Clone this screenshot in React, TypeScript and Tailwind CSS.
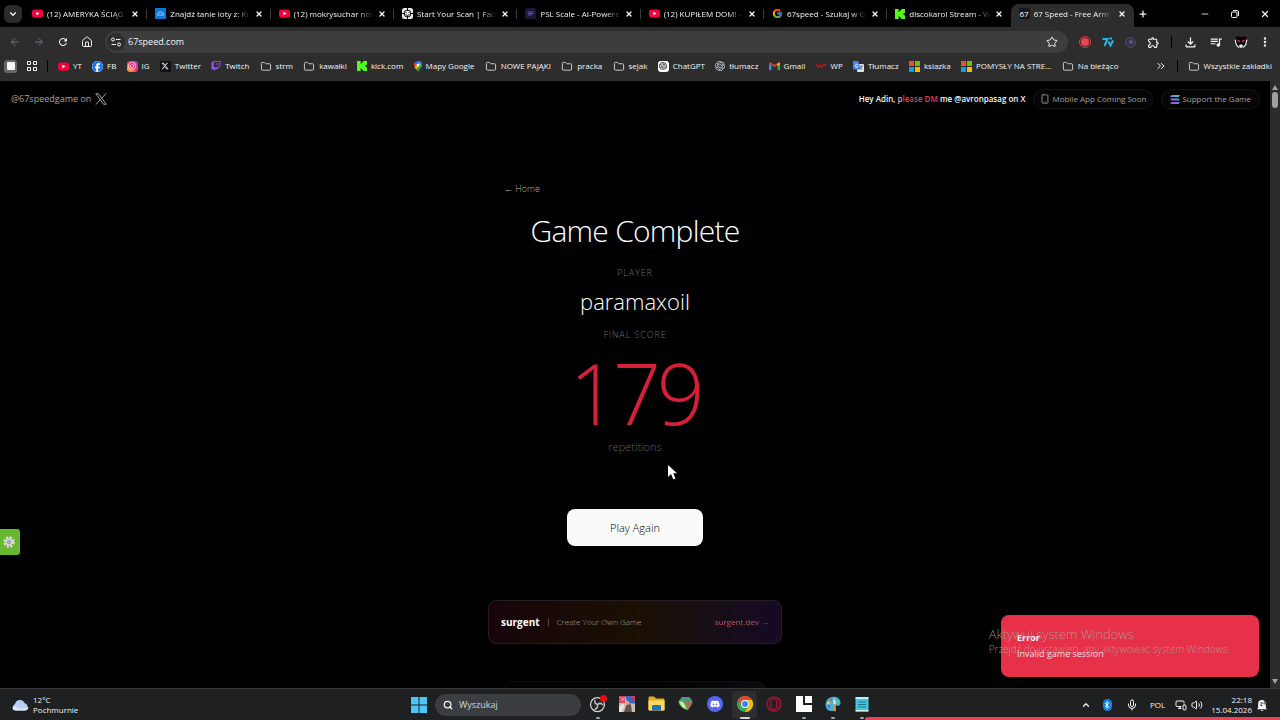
import React from 'react';
import {
  ArrowLeft,
  ArrowRight,
  Bluetooth,
  ChevronDown,
  ChevronsRight,
  ChevronUp,
  EllipsisVertical,
  Folder,
  House,
  Mic,
  Minus,
  MonitorSmartphone,
  Plus,
  Search,
  Smartphone,
  Star,
  Volume2,
  X,
} from 'lucide-react';
import { FaDiscord, FaFacebook, FaInstagram, FaTwitch, FaXTwitter } from 'react-icons/fa6';
import { FcGoogle } from 'react-icons/fc';
import { MdOutlineExtension, MdOutlineFileDownload, MdOutlineQueueMusic, MdRefresh } from 'react-icons/md';
import { SiOpenai } from 'react-icons/si';

const YoutubeIcon = () => (
  <svg viewBox="0 0 24 24" className="size-[11px] shrink-0">
    <rect x="0" y="3" width="24" height="18" rx="5" fill="#f5003c" />
    <path d="M9.5 8v8l7-4z" fill="#fff" />
  </svg>
);

const KickIcon = () => (
  <svg viewBox="0 0 11 11" className="size-[10px] shrink-0">
    <path d="M0 0h4v3h1V2h1V1h1V0h4v4h-1v1H9v1h1v1h1v4H7v-1H6V9H5V8H4v3H0z" fill="#53fc18" />
  </svg>
);

const BoatIcon = () => (
  <svg viewBox="0 0 22 22" className="size-[11px] shrink-0">
    <rect width="22" height="22" fill="#0b78d8" />
    <path d="M5 13q0-5 6-5t6 5M4 14h14" stroke="#9fd0ff" strokeWidth="2" fill="none" />
  </svg>
);

const FaceIcon = () => (
  <svg viewBox="0 0 22 22" className="size-[11px] shrink-0">
    <rect width="22" height="22" rx="5" fill="#eee" />
    <circle cx="11" cy="11" r="7" fill="none" stroke="#111" strokeWidth="2" />
    <path d="M11 0v6M11 16v6M0 11h6M16 11h6M8 8v2M14 8v2M7 13q4 4 8 0" stroke="#111" strokeWidth="2" fill="none" />
  </svg>
);

const PslIcon = () => (
  <svg viewBox="0 0 22 22" className="size-[11px] shrink-0">
    <rect width="22" height="22" rx="4" fill="#1a1638" />
    <path d="M5 8h12M5 11h12M6 14h8" stroke="#5b4fc4" strokeWidth="2" />
  </svg>
);

const SpeedIcon = () => (
  <span className="flex size-[11px] shrink-0 items-center justify-center bg-[#181818] text-[8px] leading-none text-white">67</span>
);

const InstagramIcon = () => (
  <span className="flex size-[11px] shrink-0 items-center justify-center rounded-[3px] bg-linear-to-tr from-[#fdb432] via-[#f0275f] to-[#a42ee0] text-white">
    <FaInstagram className="size-2" />
  </span>
);

const XLogoIcon = () => (
  <span className="flex size-[11px] shrink-0 items-center justify-center bg-[#111] text-gray-200">
    <FaXTwitter className="size-2" />
  </span>
);

const MapsIcon = () => (
  <svg viewBox="0 0 16 22" className="h-[11px] w-2 shrink-0">
    <path d="M8 0a8 8 0 0 1 8 8H8z" fill="#4285f4" />
    <path d="M8 0a8 8 0 0 0-6 2.600L8 8z" fill="#1a73e8" />
    <path d="M2 2.600A8 8 0 0 0 1 12l7-4z" fill="#ea4335" />
    <path d="M1 12c1 2 2 3 3.500 5L13 6 8 8z" fill="#fbbc04" />
    <path d="M16 8c0 6-6 8-8 14-1-3-2-4-3.500-5L13 6z" fill="#34a853" />
    <circle cx="8" cy="8" r="3" fill="#fff" />
  </svg>
);

const GmailIcon = () => (
  <svg viewBox="0 0 22 16" className="h-2 w-[11px] shrink-0">
    <path d="M0 3v13h5V6z" fill="#4285f4" />
    <path d="M22 3v13h-5V6z" fill="#34a853" />
    <path d="M0 2l11 8 11-8-2-2-9 6-9-6z" fill="#ea4335" />
    <path d="M17 4l5-3v4l-5 4z" fill="#fbbc04" />
  </svg>
);

const WpIcon = () => (
  <svg viewBox="0 0 22 12" className="h-1.5 w-[11px] shrink-0">
    <path d="M1 2l3 8 4-7 3 7 3-8h5q3 4-4 4" fill="none" stroke="#d8141c" strokeWidth="2" />
  </svg>
);

const TranslateIcon = () => (
  <svg viewBox="0 0 22 22" className="size-[11px] shrink-0">
    <rect x="8" y="6" width="14" height="16" rx="2" fill="#dfe3ea" />
    <path d="M0 2q0-2 2-2h8l6 17H2q-2 0-2-2z" fill="#4b86ee" />
    <path d="M10 8a3 3 0 1 0 0 3H7" stroke="#fff" strokeWidth="1.500" fill="none" />
    <path d="M14 10h6M17 9v2q-1 4-3 5M15 12l4 5" stroke="#667" strokeWidth="1.500" fill="none" />
  </svg>
);

const MicrosoftIcon = () => (
  <svg viewBox="0 0 22 22" className="size-[11px] shrink-0">
    <path d="M0 0h10v10H0z" fill="#f25022" />
    <path d="M12 0h10v10H12z" fill="#7fba00" />
    <path d="M0 12h10v10H0z" fill="#00a4ef" />
    <path d="M12 12h10v10H12z" fill="#ffb900" />
  </svg>
);

const ChatGptIcon = () => (
  <span className="flex size-[11px] shrink-0 items-center justify-center rounded-[3px] bg-white text-black">
    <SiOpenai className="size-2" />
  </span>
);

const FolderIcon = () => <Folder className="h-[11px] w-3 shrink-0 text-gray-300" strokeWidth={2} />;

const TABS = [
  { id: 1, label: '(12) AMERYKA ŚCIĄG', icon: <YoutubeIcon /> },
  { id: 2, label: 'Znajdź tanie loty z: Kr', icon: <BoatIcon /> },
  { id: 3, label: '(12) mokrysuchar nov', icon: <YoutubeIcon /> },
  { id: 4, label: 'Start Your Scan | Face', icon: <FaceIcon /> },
  { id: 5, label: 'PSL Scale - AI-Powere', icon: <PslIcon /> },
  { id: 6, label: '(12) KUPIŁEM DOM! -', icon: <YoutubeIcon /> },
  { id: 7, label: '67speed - Szukaj w G', icon: <FcGoogle className="size-[11px] shrink-0" /> },
  { id: 8, label: 'discokarol Stream - W', icon: <KickIcon /> },
  { id: 9, label: '67 Speed - Free Arm', icon: <SpeedIcon />, active: true },
];

const BOOKMARKS = [
  { name: 'YT', icon: <YoutubeIcon /> },
  { name: 'FB', icon: <FaFacebook className="size-[11px] shrink-0 rounded-full bg-white text-[#1877f2]" /> },
  { name: 'IG', icon: <InstagramIcon /> },
  { name: 'Twitter', icon: <XLogoIcon /> },
  { name: 'Twitch', icon: <FaTwitch className="size-[10px] shrink-0 text-[#9a55ff]" /> },
  { name: 'strm', icon: <FolderIcon /> },
  { name: 'kawałki', icon: <FolderIcon /> },
  { name: 'kick.com', icon: <KickIcon /> },
  { name: 'Mapy Google', icon: <MapsIcon /> },
  { name: 'NOWE PAJĄKI', icon: <FolderIcon /> },
  { name: 'pracka', icon: <FolderIcon /> },
  { name: 'sejak', icon: <FolderIcon /> },
  { name: 'ChatGPT', icon: <ChatGptIcon /> },
  { name: 'tłumacz', icon: <SiOpenai className="size-[10px] shrink-0 text-gray-300" /> },
  { name: 'Gmail', icon: <GmailIcon /> },
  { name: 'WP', icon: <WpIcon /> },
  { name: 'Tłumacz', icon: <TranslateIcon /> },
  { name: 'ksiazka', icon: <MicrosoftIcon /> },
  { name: 'POMYSŁY NA STRE...', icon: <MicrosoftIcon /> },
  { name: 'Na bieżąco', icon: <FolderIcon /> },
];

function TabStrip() {
  return (
    <div className="flex h-[27px] shrink-0 items-center bg-black">
      <button aria-label="Szukaj kart" className="ml-1 flex size-[18px] shrink-0 items-center justify-center rounded-md bg-[#2b2b2b]">
        <ChevronDown className="size-2.5" strokeWidth={3} />
      </button>
      <div role="tablist" className="ml-0.5 flex min-w-0 flex-1 self-stretch pt-1">
        {TABS.map((tab, i) => (
          <div
            key={tab.id}
            className={`relative flex min-w-0 flex-1 items-center gap-1 px-2 pb-1 ${tab.active ? 'rounded-t-lg bg-[#2d2d2d]' : ''}`}
          >
            {tab.icon}
            <button
              role="tab"
              aria-selected={!!tab.active}
              className="min-w-0 flex-1 overflow-hidden mask-r-from-80% text-left text-[8px] leading-3 font-normal whitespace-nowrap"
            >
              {tab.label}
            </button>
            <button aria-label="Zamknij kartę">
              <X className="size-2" strokeWidth={4} />
            </button>
            {i < TABS.length - 2 && <span className="absolute right-0 h-2.5 w-px bg-[#3a3a3a]" />}
          </div>
        ))}
      </div>
      <div className="flex w-[146px] shrink-0 items-center justify-between pr-2.5 pl-1">
        <button aria-label="Nowa karta">
          <Plus className="size-2.5" strokeWidth={3} />
        </button>
        <div className="flex gap-5">
          <button aria-label="Minimalizuj">
            <Minus className="size-2.5" />
          </button>
          <button aria-label="Przywróć">
            <svg viewBox="0 0 20 20" className="size-2.5" fill="none" stroke="currentColor" strokeWidth="2">
              <rect x="3" y="6" width="11" height="11" rx="2" />
              <path d="M6 3h8q3 0 3 3v8" />
            </svg>
          </button>
          <button aria-label="Zamknij">
            <X className="size-2.5" strokeWidth={3} />
          </button>
        </div>
      </div>
    </div>
  );
}

function Toolbar() {
  return (
    <div className="flex h-[30px] items-center">
      <div className="flex w-[105px] shrink-0 items-center gap-3 pl-[9px]">
        <button aria-label="Wstecz"><ArrowLeft className="size-3 text-gray-500" /></button>
        <button aria-label="Dalej"><ArrowRight className="size-3 text-gray-500" /></button>
        <button aria-label="Odśwież"><MdRefresh className="size-3" /></button>
        <button aria-label="Strona główna"><House className="size-3" strokeWidth={2} /></button>
      </div>
      <div className="flex h-[22px] min-w-0 flex-1 items-center rounded-full bg-[#3d3d3d] pr-2.5 pl-0.5">
        <span className="flex size-[18px] shrink-0 items-center justify-center rounded-full bg-[#2d2d2d]">
          <svg viewBox="0 0 20 20" className="size-2.5" fill="none" stroke="currentColor" strokeWidth="2">
            <circle cx="4" cy="5" r="3" />
            <circle cx="16" cy="15" r="3" />
            <path d="M10 5h9M1 15h9" />
          </svg>
        </span>
        <input
          aria-label="Adres"
          defaultValue="67speed.com"
          className="ml-[3px] min-w-0 flex-1 bg-transparent text-[9px] leading-4 outline-none"
        />
        <button aria-label="Dodaj zakładkę"><Star className="size-3" strokeWidth={2} /></button>
      </div>
      <div className="flex w-[212px] shrink-0 items-center justify-between pr-[9px] pl-[11px]">
        <button aria-label="Nagrywanie" className="flex size-3 items-center justify-center rounded-full border border-[#e23c4a]">
          <span className="size-2 rounded-full bg-[#e9434f]" />
        </button>
        <button aria-label="7TV">
          <svg viewBox="0 0 24 20" className="h-2.5 w-3" fill="none" stroke="#29b6e8" strokeWidth="4">
            <path d="M1 4h10L5 18M13 9l4 8 5-10M15 3h5" />
          </svg>
        </button>
        <button aria-label="Rozszerzenie" className="flex size-[11px] items-center justify-center rounded-full border border-[#51496b] bg-[#35314a]">
          <span className="size-1 rounded-full bg-[#5c5778]" />
        </button>
        <button aria-label="Rozszerzenia"><MdOutlineExtension className="size-[13px]" /></button>
        <span className="h-3 w-px bg-black" />
        <button aria-label="Pobrane"><MdOutlineFileDownload className="size-[15px]" /></button>
        <button aria-label="Multimedia"><MdOutlineQueueMusic className="size-[14px]" /></button>
        <button aria-label="Profil">
          <svg viewBox="0 0 24 24" className="size-3.5">
            <path d="M3 3l5-1 4 2 4-2 5 1 1 8-3 8-7 5-7-5-3-8z" fill="#050505" />
            <path d="M2 8l2 9 5 5M22 8l-2 9-5 5" fill="none" stroke="#eee" strokeWidth="2" />
            <path d="M8 18l4-2 4 2-4 5z" fill="#eee" />
            <path d="M6 9l4 2M18 9l-4 2" stroke="#e8203a" strokeWidth="3" />
          </svg>
        </button>
        <button aria-label="Menu"><EllipsisVertical className="size-3" strokeWidth={3} /></button>
      </div>
    </div>
  );
}

function BookmarksBar() {
  return (
    <nav className="flex h-[18px] items-center text-[8px] leading-3 font-normal whitespace-nowrap">
      <span className="ml-1 flex size-[13px] shrink-0 items-center justify-center rounded-[3px] bg-[#666]">
        <span className="size-2 rounded-[1px] bg-gray-100" />
      </span>
      <svg viewBox="0 0 20 20" className="ml-2.5 size-2.5 shrink-0" fill="none" stroke="currentColor" strokeWidth="2">
        <path d="M1 1h6v6H1zM13 1h6v6h-6zM1 13h6v6H1zM13 13h6v6h-6z" />
      </svg>
      <span className="ml-2.5 h-3 w-px shrink-0 bg-black" />
      <div className="ml-2.5 flex min-w-0 flex-1 justify-between">
        {BOOKMARKS.map((b) => (
          <a key={b.name} href="#" className="flex items-center gap-1">
            {b.icon}
            <span>{b.name}</span>
          </a>
        ))}
      </div>
      <ChevronsRight className="ml-9 size-3 shrink-0" strokeWidth={2} />
      <span className="ml-2.5 h-3 w-px shrink-0 bg-black" />
      <a href="#" className="mr-2 ml-2.5 flex shrink-0 items-center gap-1">
        <FolderIcon />
        <span>Wszystkie zakładki</span>
      </a>
    </nav>
  );
}

function PageHeader() {
  return (
    <header className="flex h-9 shrink-0 items-center justify-between pr-2.5 pl-[11px]">
      <a href="#" className="flex items-center gap-1 text-[9px] leading-3 font-medium text-[#a3a3a3]">
        @67speedgame on
        <svg viewBox="0 0 24 24" className="size-3" fill="none" stroke="currentColor">
          <path d="M1.500 1.500h5.500l15.500 21H17z" strokeWidth="2" />
          <path d="M22 1l-9 10M2 23l9-10" strokeWidth="2" />
        </svg>
      </a>
      <div className="flex items-center gap-2 text-[8px] leading-3 font-medium">
        <p className="font-semibold text-gray-100">
          Hey Adin, <span className="text-[#e2aab2]">p</span>
          <span className="text-[#dc4054]">lease DM</span> me @avronpasag on X
        </p>
        <button className="flex h-5 items-center gap-0.5 rounded-full border border-[#151515] bg-[#050505] px-1.5 text-[#a3a3a3]">
          <Smartphone className="size-2.5" strokeWidth={2} />
          Mobile App Coming Soon
        </button>
        <button className="flex h-5 items-center gap-0.5 rounded-full border border-[#151515] bg-[#050505] px-2 text-[#a3a3a3]">
          <svg viewBox="0 0 20 18" className="h-[9px] w-2.5">
            <defs>
              <linearGradient id="sol" x1="0" y1="1" x2="1" y2="0">
                <stop offset="0" stopColor="#b43df5" />
                <stop offset="0.5" stopColor="#7f7ae0" />
                <stop offset="1" stopColor="#19f0a0" />
              </linearGradient>
            </defs>
            <path d="M3 0h17l-3 4H0zM0 7h17l3 4H3zM3 14h17l-3 4H0z" fill="url(#sol)" />
          </svg>
          Support the Game
        </button>
      </div>
    </header>
  );
}

function GameResult() {
  return (
    <section className="mx-auto flex w-full max-w-[294px] flex-col items-center pt-[66px] font-light">
      <a href="#" className="self-start pl-4 text-[9px] leading-3 text-[#b0b0b0]">← Home</a>
      <h1 className="mt-4 text-[30px] leading-10 tracking-tight whitespace-nowrap text-white">Game Complete</h1>
      <p className="mt-4 text-[9px] leading-3 tracking-widest text-[#707070]">PLAYER</p>
      <p className="mt-1.5 text-[22px] leading-8 text-white">paramaxoil</p>
      <p className="mt-3 text-[9px] leading-3 tracking-widest text-[#707070]">FINAL SCORE</p>
      <p className="mt-1 text-[84px] leading-[96px] tracking-tighter text-[#d81f3a]">179</p>
      <p className="text-[11px] leading-3 text-[#606060]">repetitions</p>
      <button className="mt-14 h-[37px] w-[136px] rounded-lg bg-[#fafafa] text-[11px] leading-4 text-black">Play Again</button>
      <a
        href="#"
        className="mt-[54px] flex h-11 w-full items-center rounded-lg border border-[#251e22] bg-linear-to-r from-[#17050b] via-[#1a1002] to-[#160925] px-3 text-[8px]"
      >
        <span className="text-[10px] font-bold text-white">surgent</span>
        <span className="ml-2 h-2 w-px bg-[#51464a]" />
        <span className="ml-2 text-[#aaa2a0]">Create Your Own Game</span>
        <span className="ml-auto bg-linear-to-r from-[#d4488c] via-[#c3643c] to-[#8a5bb0] bg-clip-text font-medium text-transparent">
          surgent.dev →
        </span>
      </a>
      <div className="mt-[37px] h-12 w-[262px] rounded-lg border border-[#0d0e10] bg-linear-to-r from-black to-[#0b0c0e]" />
    </section>
  );
}

function Scrollbar() {
  return (
    <div className="flex w-2.5 shrink-0 flex-col items-center bg-[#2c2c2c] py-1">
      <svg viewBox="0 0 6 5" className="h-[5px] w-1.5" fill="#9f9f9f"><path d="M3 0l3 5H0z" /></svg>
      <div className="mt-0.5 h-4 w-1.5 rounded-full bg-[#9f9f9f]" />
      <svg viewBox="0 0 6 5" className="mt-auto h-[5px] w-1.5" fill="#9f9f9f"><path d="M3 5l3-5H0z" /></svg>
    </div>
  );
}

const ObsIcon = () => (
  <svg viewBox="0 0 36 36" className="size-[18px]">
    <circle cx="17" cy="19" r="14" fill="#232323" stroke="#d6d6d6" strokeWidth="2.500" />
    <g fill="none" stroke="#bdbdbd" strokeWidth="3">
      <path d="M17 19q-7-2-5-9M17 19q6-5 11 1M17 19q1 8-6 10" />
    </g>
    <circle cx="29" cy="7" r="7" fill="#f00a0a" />
  </svg>
);

const PictureIcon = () => (
  <svg viewBox="0 0 32 32" className="size-4">
    <rect width="32" height="32" fill="#c9bfb6" />
    <path d="M0 0h12v14H0z" fill="#d84a5c" />
    <path d="M12 0h20v15H18z" fill="#3566c8" />
    <path d="M23 0h9v12z" fill="#d33a52" />
    <path d="M3 3l6 5M4 10l7-6" stroke="#e9c9cf" strokeWidth="2" />
    <path d="M10 32l4-12 4-8 6 6 2 14z" fill="#65534b" />
    <circle cx="17" cy="14" r="4" fill="#d8a384" />
    <path d="M0 22l8-7 3 5-6 12H0z" fill="#e6e4e0" />
  </svg>
);

const ExplorerIcon = () => (
  <svg viewBox="0 0 34 30" className="h-[15px] w-[17px]">
    <path d="M1 3q0-2 2-2h9l4 4h15q2 0 2 2v20q0 2-2 2H3q-2 0-2-2z" fill="#e9a824" />
    <path d="M1 9h32v18q0 2-2 2H3q-2 0-2-2z" fill="#ffd95a" />
    <path d="M8 20q0-2 2-2h14q2 0 2 2v9H8z" fill="#2472b8" />
  </svg>
);

const GemIcon = () => (
  <svg viewBox="0 0 30 30" className="size-[15px]">
    <path d="M8 2h14l7 9q0 6-9 17Q4 24 1 12z" fill="#a0705a" />
    <path d="M8 2h14l7 8q-9 3-16 1L1 12z" fill="#4a9a80" />
    <path d="M1 10q7-2 11 3 4 5 7 15Q4 24 1 10z" fill="#5fd850" />
    <path d="M4 12q5-1 8 4l4 10Q7 22 4 12z" fill="#d9f5c6" />
  </svg>
);

const ChromeIcon = () => (
  <svg viewBox="0 0 32 32" className="size-4">
    <circle cx="16" cy="16" r="16" fill="#34a853" />
    <path d="M2.100 8A16 16 0 0 1 29.900 8H16a8 8 0 0 0-7 12z" fill="#ea4335" />
    <path d="M29.900 8A16 16 0 0 1 16 32l7-12a8 8 0 0 0-7-12z" fill="#fbbc04" />
    <circle cx="16" cy="16" r="8" fill="#fff" />
    <circle cx="16" cy="16" r="6" fill="#3b82f0" />
  </svg>
);

const OperaIcon = () => (
  <svg viewBox="0 0 32 32" className="size-4" fill="none" stroke="#b01238" strokeWidth="2.500">
    <circle cx="16" cy="16" r="14" />
    <ellipse cx="16" cy="16" rx="6" ry="11" />
    <path d="M8 6q-5 10 0 20M24 6q5 10 0 20" strokeWidth="1" />
  </svg>
);

const BlockIcon = () => (
  <svg viewBox="0 0 32 32" className="size-4">
    <path d="M0 0h14v18h18v14H0z" fill="#fff" />
    <path d="M18 0h14v14H18z" fill="#fff" />
  </svg>
);

const PaintIcon = () => (
  <svg viewBox="0 0 32 32" className="size-4">
    <path d="M1 18Q1 5 14 2q14-2 17 10 1 9-8 7-5 1-3 5 1 5-6 6Q2 30 1 18z" fill="#42b4dc" />
    <circle cx="7" cy="14" r="2.500" fill="#f4e04d" />
    <circle cx="12" cy="8" r="2.500" fill="#e4523b" />
    <circle cx="26" cy="12" r="2.500" fill="#57cf6e" />
    <circle cx="8" cy="21" r="2.500" fill="#7d5ac9" />
    <path d="M17 15l4 1 1 13q-2 4-5 0z" fill="#d6984e" />
    <path d="M18 4q5 5 4 12h-5q-2-6 1-12z" fill="#ead9a8" />
  </svg>
);

const NotepadIcon = () => (
  <svg viewBox="0 0 28 32" className="h-4 w-3.5">
    <rect x="1" y="2" width="26" height="29" rx="2" fill="#48c6dd" />
    <path d="M1 2h26v4H1z" fill="#b9eef5" />
    <path d="M6 12h16M6 17h16M6 22h16" stroke="#15758d" strokeWidth="2" />
    <path d="M1 28h26v3H1z" fill="#dceef0" />
  </svg>
);

const APPS = [
  { name: 'OBS', icon: <ObsIcon />, running: true },
  { name: 'Zdjęcia', icon: <PictureIcon /> },
  { name: 'Eksplorator', icon: <ExplorerIcon /> },
  { name: 'Gem', icon: <GemIcon /> },
  {
    name: 'Discord',
    icon: (
      <span className="flex size-4 items-center justify-center rounded-full bg-[#5865f2]">
        <FaDiscord className="size-2.5 text-white" />
      </span>
    ),
  },
  { name: 'Chrome', icon: <ChromeIcon />, running: true, active: true },
  { name: 'Opera', icon: <OperaIcon /> },
  { name: 'Klocki', icon: <BlockIcon />, running: true },
  { name: 'Paint', icon: <PaintIcon />, running: true },
  { name: 'Notatnik', icon: <NotepadIcon />, running: true },
];

function Taskbar() {
  return (
    <footer className="relative grid h-8 shrink-0 grid-cols-[1fr_auto_1fr] items-center border-t border-[#393b3b] bg-[#1e2021] text-[8px] leading-[10px] font-normal">
      <div className="flex items-center gap-1 pl-3">
        <svg viewBox="0 0 34 24" className="h-3 w-[17px]">
          <path d="M7 23a7 7 0 0 1-1-13A10 10 0 0 1 25 8a8 8 0 0 1 2 15z" fill="#b8cff6" />
          <path d="M1 17q3-5 9-1 8 6 23 0-1 7-8 7H7q-6 0-6-6z" fill="#dbe6fb" />
        </svg>
        <div>
          <p>12°C</p>
          <p>Pochmurnie</p>
        </div>
      </div>
      <div className="flex items-center pl-1.5">
        <button aria-label="Start">
          <svg viewBox="0 0 32 32" className="size-4" fill="#4cc6f6">
            <path d="M0 0h15v15H0zM17 0h15v15H17zM0 17h15v15H0zM17 17h15v15H17z" />
          </svg>
        </button>
        <label className="mr-1 ml-2 flex h-[22px] w-[146px] items-center gap-1.5 rounded-full bg-[#3b3e40] px-2">
          <Search className="size-2.5 shrink-0" strokeWidth={3} />
          <input
            aria-label="Wyszukaj"
            placeholder="Wyszukaj"
            className="min-w-0 flex-1 bg-transparent text-[9px] leading-4 outline-none placeholder:text-gray-300"
          />
        </label>
        <div className="flex w-[290px] justify-between">
          {APPS.map((app) => (
            <button
              key={app.name}
              aria-label={app.name}
              className={`relative flex h-7 w-[25px] items-center justify-center rounded pb-0.5 ${app.active ? 'bg-[#2c2e2f]' : ''}`}
            >
              {app.icon}
              {app.running && (
                <span className={`absolute bottom-0 h-0.5 rounded-full ${app.active ? 'w-2.5 bg-gray-300' : 'w-1 bg-gray-400'}`} />
              )}
            </button>
          ))}
        </div>
      </div>
      <div className="flex items-center justify-end pr-3">
        <ChevronUp className="size-2.5" strokeWidth={3} />
        <span className="ml-3 flex h-3 w-[9px] items-center justify-center rounded-full bg-[#1683dc]">
          <Bluetooth className="size-2" strokeWidth={3} />
        </span>
        <Mic className="ml-3.5 size-3" strokeWidth={2} />
        <span className="ml-3">POL</span>
        <MonitorSmartphone className="ml-2.5 size-3" strokeWidth={2} />
        <Volume2 className="ml-1 size-3" strokeWidth={2} />
        <div className="ml-2 text-right">
          <p>22:18</p>
          <p>15.04.2026</p>
        </div>
        <svg viewBox="0 0 22 22" className="ml-1 size-3">
          <path d="M4 16V9a7 7 0 0 1 14 0v7l2 3H2zM8 20h6l-3 2z" fill="#fff" />
          <path d="M8 7h4l-4 5h4M14 4h4l-4 5h4" stroke="#222" strokeWidth="1.500" fill="none" />
        </svg>
      </div>
      <div className="absolute right-0 bottom-0 h-[3px] w-[415px] rounded-tl bg-[#ec4257]" />
    </footer>
  );
}

export default function App() {
  return (
    <div className="flex h-screen flex-col overflow-hidden bg-black font-['Open_Sans','Noto_Sans',sans-serif] text-gray-100">
      <TabStrip />
      <div className="h-[54px] shrink-0 bg-[#2d2d2d]">
        <Toolbar />
        <BookmarksBar />
      </div>
      <div className="relative flex min-h-0 flex-1">
        <main className="flex min-w-0 flex-1 flex-col overflow-hidden">
          <PageHeader />
          <GameResult />
        </main>
        <Scrollbar />

        <button
          aria-label="Ustawienia"
          className="absolute top-[448px] left-0 flex h-[26px] w-5 items-center rounded-r-[3px] bg-[#66b82c] pl-[3px]"
        >
          <svg viewBox="0 0 24 24" className="size-3">
            <circle cx="12" cy="12" r="8" fill="none" stroke="#ddd" strokeWidth="7" strokeDasharray="4 2.300" />
            <circle cx="12" cy="12" r="6" fill="#ababab" stroke="#e4e4e4" strokeWidth="2" />
          </svg>
        </button>

        <div role="alert" className="absolute right-[21px] bottom-[11px] flex h-[62px] w-[258px] flex-col justify-center rounded-lg bg-[#e63148] pl-4">
          <p className="text-[9px] leading-4 font-bold text-white">Error</p>
          <p className="text-[9px] leading-4 font-medium text-[#fbdde1]">Invalid game session</p>
        </div>
        <div className="pointer-events-none absolute right-[50px] bottom-8 font-light text-[#a8a8a8]/80">
          <p className="text-[13px] leading-4">Aktywuj system Windows</p>
          <p className="text-[10px] leading-[14px]">Przejdź do ustawień, aby aktywować system Windows.</p>
        </div>

        <svg viewBox="0 0 12 20" className="absolute top-[384px] left-[668px] h-[15px] w-[9px]">
          <path d="M0 0v16l4-4 3 7 3-1-3-7h5z" fill="#fff" />
        </svg>
      </div>
      <Taskbar />
    </div>
  );
}
